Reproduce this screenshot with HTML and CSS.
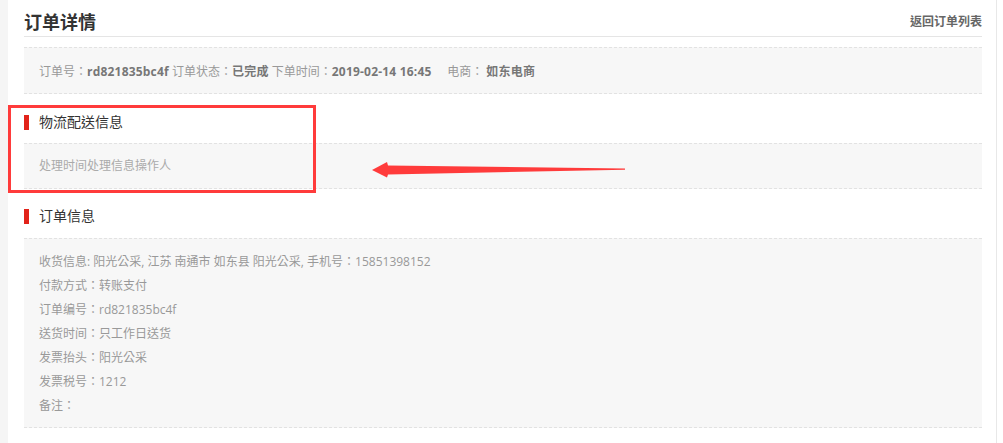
FILE: index.html
```html
<!DOCTYPE html>
<html lang="zh-CN">
<head>
<meta charset="utf-8">
<title>订单详情</title>
<link rel="stylesheet" href="styles.css">
</head>
<body>
<div class="page">
  <div class="side"></div>
  <div class="main">
    <div class="header">
      <h1 class="title">订单详情</h1>
      <a class="back" href="#">返回订单列表</a>
    </div>
    <div class="box summary">
      订单号：<b>rd821835bc4f</b> 订单状态：<b>已完成</b> 下单时间：<b>2019-02-14 16:45</b>&nbsp;&nbsp;&nbsp;&nbsp; 电商：&nbsp;<b>如东电商</b>
    </div>
    <div class="section-title"><span class="bar"></span>物流配送信息</div>
    <div class="box logistics">处理时间处理信息操作人</div>
    <div class="section-title second"><span class="bar"></span>订单信息</div>
    <div class="box details">
      <p>收货信息: 阳光公采, 江苏 南通市 如东县 阳光公采, 手机号：15851398152</p>
      <p>付款方式：转账支付</p>
      <p>订单编号：rd821835bc4f</p>
      <p>送货时间：只工作日送货</p>
      <p>发票抬头：阳光公采</p>
      <p>发票税号：1212</p>
      <p>备注：</p>
    </div>
  </div>
</div>
<div class="highlight"></div>
<svg class="arrow" width="260" height="20" viewBox="370 160 260 20">
  <polygon points="372,170 387,162 388,165.5 625,168.6 625,169.8 388,174.5 387,177.5" fill="#ff3b3b"/>
</svg>
</body>
</html>
```

FILE: styles.css
```css
html, body {
  margin: 0;
  padding: 0;
  background: #ffffff;
}
body {
  font-family: "Open Sans", "Noto Sans CJK TC", sans-serif;
  font-feature-settings: "locl" 0;
  font-size: 12px;
  color: #999;
  position: relative;
  width: 1003px;
  height: 443px;
  overflow: hidden;
}
.page {
  display: flex;
  min-height: 443px;
}
.side {
  width: 8px;
  background: #f5f5f5;
  flex: none;
}
.main {
  width: 958px;
  padding: 0 14px 0 16px;
  border-right: 1px solid #e8e8e8;
  background: #fff;
}
.header {
  display: flex;
  justify-content: space-between;
  align-items: center;
  padding-top: 7px;
  height: 29px;
  border-bottom: 1px solid #e5e5e5;
}
.title {
  margin: 0;
  font-size: 18px;
  font-weight: bold;
  color: #333;
  line-height: 30px;
}
.back {
  font-size: 12px;
  font-weight: bold;
  color: #666;
  text-decoration: none;
  line-height: 30px;
}
.box {
  background: #f7f7f7;
  border-top: 1px dashed #e2e2e2;
  border-bottom: 1px dashed #e2e2e2;
  padding: 0 15px;
}
.summary {
  margin-top: 10px;
  line-height: 45px;
  padding-top: 1px;
  height: 44px;
}
.summary b {
  color: #777;
  letter-spacing: 0.2px;
}
.section-title {
  display: flex;
  align-items: center;
  font-size: 14px;
  color: #333;
  line-height: 20px;
  padding: 18px 0 11px;
}
.section-title.second {
  padding-top: 17px;
  padding-bottom: 12px;
}
.bar {
  width: 5px;
  height: 15px;
  background: #e2231a;
  margin-right: 10px;
}
.logistics {
  line-height: 44px;
  color: #aaa;
}
.details {
  padding-top: 11px;
  padding-bottom: 9px;
}
.details p {
  margin: 0;
  line-height: 24px;
}
.highlight {
  position: absolute;
  left: 8px;
  top: 105px;
  width: 302px;
  height: 82px;
  border: 3px solid #ff3b3b;
}
.arrow {
  position: absolute;
  left: 370px;
  top: 160px;
}
```
